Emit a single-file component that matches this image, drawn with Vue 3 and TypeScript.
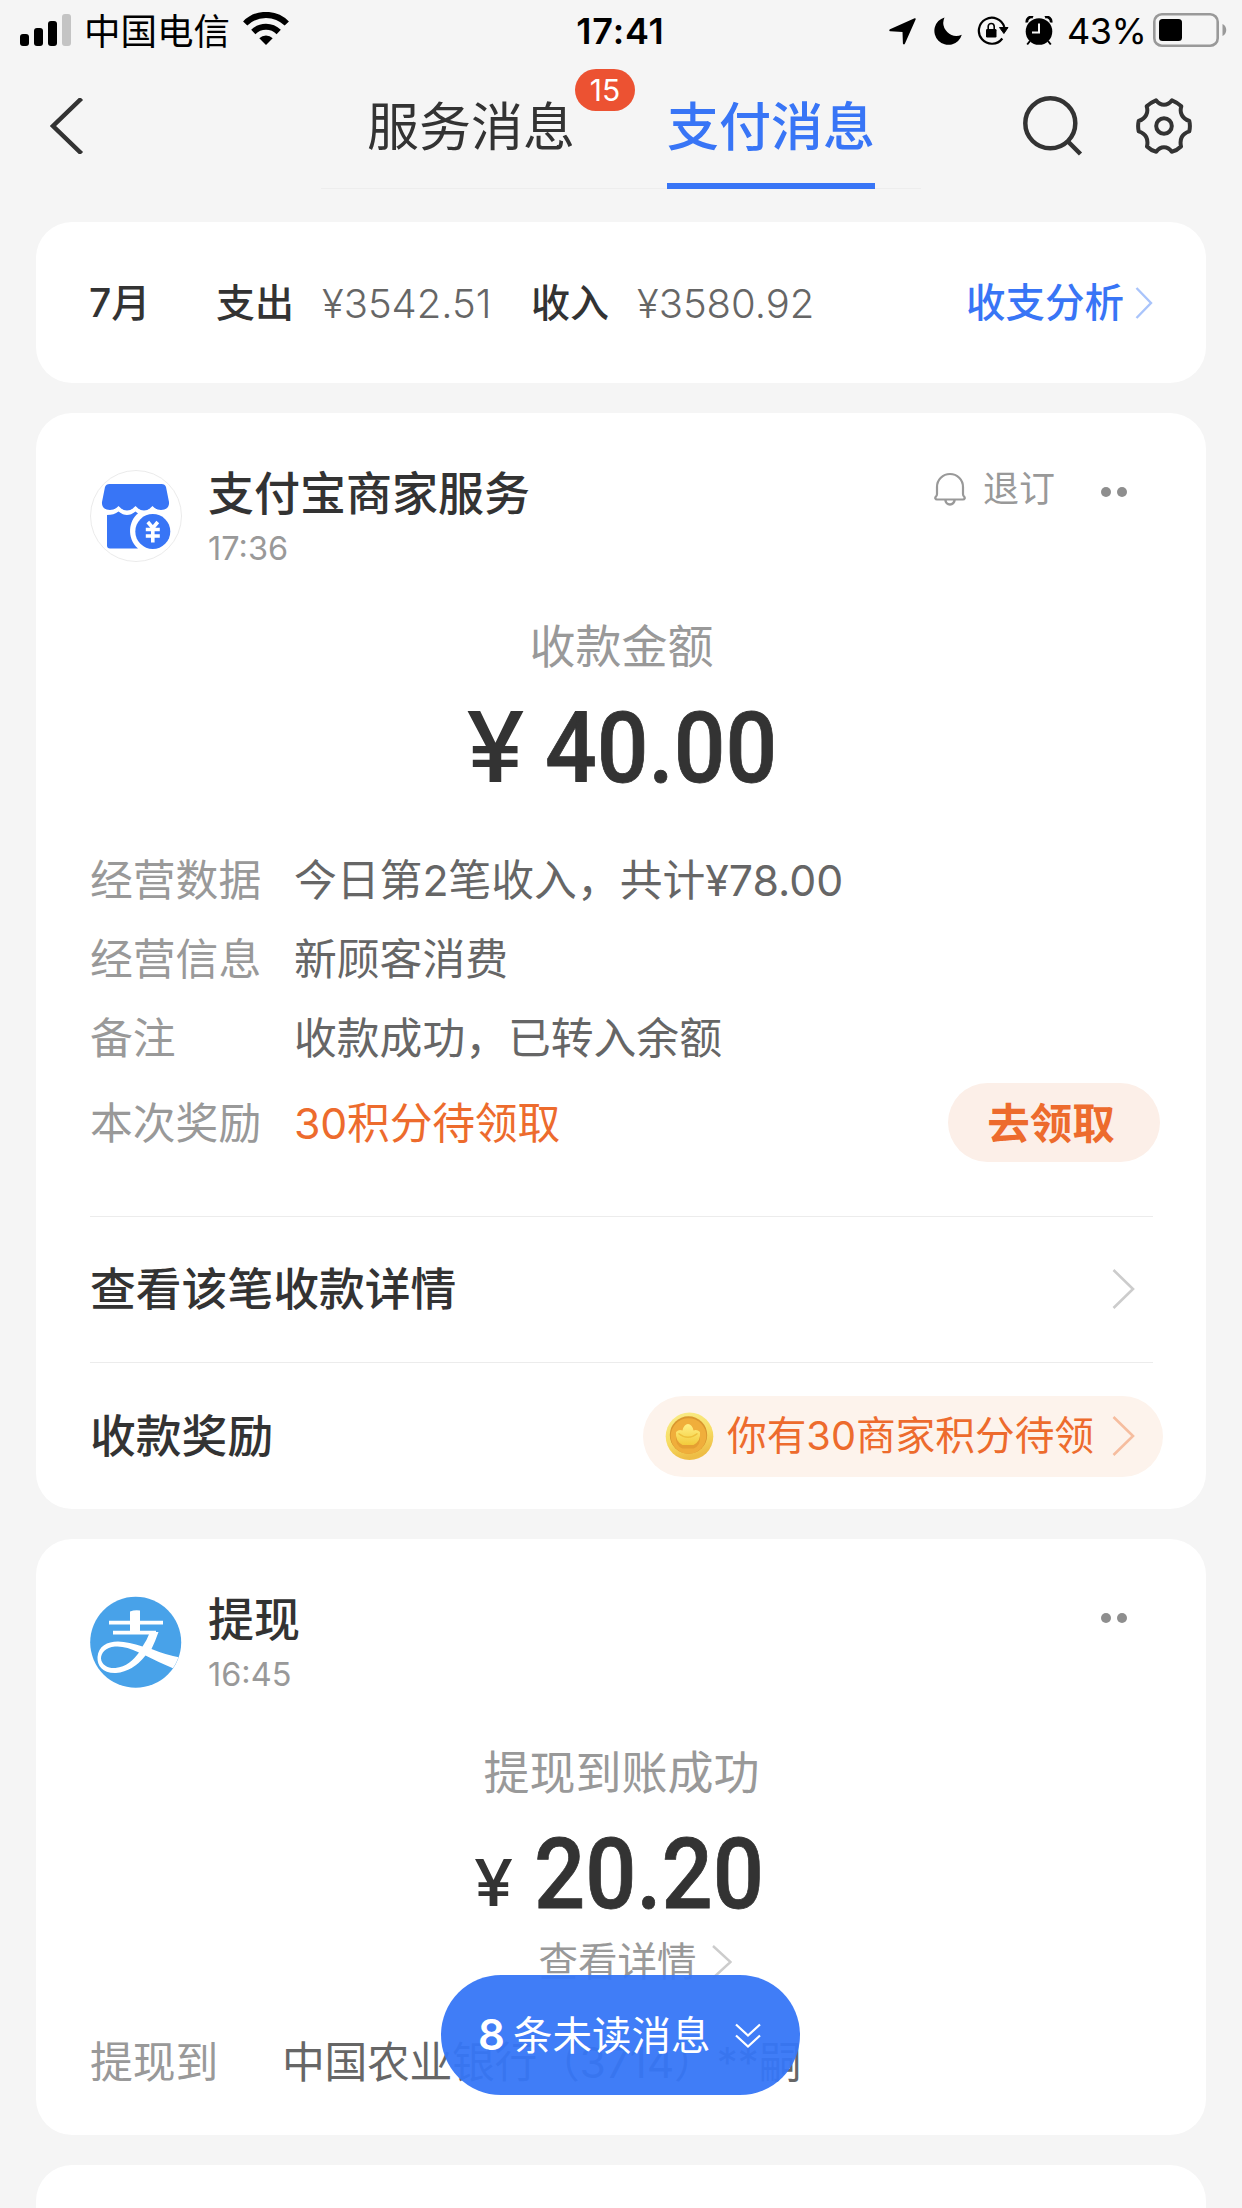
<script setup lang="ts">
interface Detail {
  label: string
  value: string
}

const summary = { month: '7月', expense: '¥3542.51', income: '¥3580.92' }

const details: Detail[] = [
  { label: '经营数据', value: '今日第2笔收入，共计¥78.00' },
  { label: '经营信息', value: '新顾客消费' },
  { label: '备注', value: '收款成功，已转入余额' },
]

const signalBars: number[] = [12, 18, 25, 32]
</script>

<template>
  <div class="screen">
    <div class="status">
      <div class="status-left">
        <div class="signal">
          <i v-for="(h, i) in signalBars" :key="i" :class="{ off: i === 3 }" :style="{ height: h + 'px' }"></i>
        </div>
        <span class="carrier">中国电信</span>
        <svg class="wifi" width="46" height="34" viewBox="0 0 46 34">
          <path d="M2.2 11.5A29.4 29.4 0 0 1 43.8 11.5" fill="none" stroke="#000" stroke-width="6" />
          <path d="M10.3 20A18 18 0 0 1 35.7 20" fill="none" stroke="#000" stroke-width="6" />
          <path d="M16.3 26.3a9.5 9.5 0 0 1 13.4 0L23 33z" />
        </svg>
      </div>
      <span class="clock">17:41</span>
      <div class="status-right">
        <svg class="loc" width="27" height="27" viewBox="0 0 27 27">
          <path d="M25.6.3c.9-.3 1.400.2 1 1.200L16 25.600c-.6 1.300-2 1.100-2.100-.3L13.500 14 1.500 13.300C.1 13.200-.2 11.900 1 11.300z" />
        </svg>
        <svg class="moon" width="28" height="28" viewBox="0 0 28 28">
          <path d="M10.500.4A14 14 0 1 0 27.800 17.800 13.200 13.200 0 0 1 10.500.4z" />
        </svg>
        <svg class="rot" width="32" height="30" viewBox="0 0 32 30">
          <path d="M27.300 11A13 13 0 1 0 25.300 22.500" fill="none" stroke="#000" stroke-width="2.200" />
          <path d="M22.500 11.500h8.500L26.900 17.500z" stroke="#000" />
          <rect x="9" y="13" width="10.500" height="8.500" rx="1.200" />
          <path d="M11.200 13.500v-3a3 3 0 0 1 6 0v3" fill="none" stroke="#000" stroke-width="1.600" />
        </svg>
        <svg class="alarm" width="28" height="30" viewBox="0 0 28 30">
          <circle cx="14" cy="15.500" r="13.300" />
          <path d="M2 6.500A4.500 4.500 0 0 1 8 1.300M26 6.500A4.500 4.500 0 0 0 20 1.300" stroke="#000" stroke-width="2.800" fill="none" />
          <path d="M5 25l-2.800 3.500M23 25l2.800 3.500" stroke="#000" stroke-width="2" />
          <path d="M14 7.500v9H7" stroke="#f5f5f5" stroke-width="2" fill="none" />
        </svg>
        <span class="pct">43%</span>
        <svg class="battery" width="74" height="34" viewBox="0 0 74 34">
          <rect x="1.300" y="1.300" width="63.400" height="31.400" rx="7.500" fill="none" stroke="#999" stroke-width="2.600" />
          <rect x="6" y="6" width="23" height="22" rx="3.500" />
          <path d="M69.500 11c5 2 5 10 0 12z" fill="#999" />
        </svg>
      </div>
    </div>

    <div class="nav">
      <svg class="back" width="34" height="56" viewBox="0 0 34 56">
        <path d="M31.500.5L3 28 31.500 55.500" fill="none" stroke="#333" stroke-width="4.500" />
      </svg>
      <div class="tabs">
        <div class="tab">服务消息<span class="badge">15</span></div>
        <div class="tab active">支付消息</div>
      </div>
      <svg class="search" width="60" height="62" viewBox="0 0 60 62">
        <circle cx="27.300" cy="27.300" r="25" fill="none" stroke="#333" stroke-width="4.500" />
        <path d="M45 45.500L57.500 58" stroke="#333" stroke-width="4.500" />
      </svg>
      <svg class="gear" width="56" height="56" viewBox="0 0 56 56">
        <path
          d="M20 2.300Q23.500 6.800 28 6.800T36 2.300Q41 4.300 45.300 8.300Q43.800 13 45.800 17T53.300 23Q54.500 28 53.300 33.300Q47.800 35 45.800 39T45 48.500Q41 52.500 35.800 53.700Q32.500 49.200 28 49.200T20.200 53.700Q15 52.500 11 48.500Q12.200 43 10.200 39T2.700 33.300Q1.500 28 2.700 23Q8.200 21 10.200 17T10.700 8.300Q15 4.300 20 2.300z"
          fill="none" stroke="#333" stroke-width="4" stroke-linejoin="round" />
        <circle cx="28" cy="28" r="7.800" fill="none" stroke="#333" stroke-width="4" />
      </svg>
    </div>

    <div class="cards">
      <section class="card summary">
        <span class="strong month">{{ summary.month }}</span>
        <span class="strong">支出</span>
        <span class="sum out">{{ summary.expense }}</span>
        <span class="strong">收入</span>
        <span class="sum">{{ summary.income }}</span>
        <span class="analysis">收支分析</span>
        <svg width="18" height="32" viewBox="0 0 18 32">
          <path d="M1.500 1L16 16 1.500 31" fill="none" stroke="#a9c4fb" stroke-width="2.400" />
        </svg>
      </section>

      <section class="card income">
        <header class="head">
          <svg class="avatar" width="92" height="92" viewBox="0 0 92 92">
            <circle cx="46" cy="46" r="45.500" fill="#fff" stroke="#ebebeb" />
            <g transform="translate(-1 0)">
              <path d="M20.500 14h52q3.500 0 4.500 3l3 15c.5 5-3 8-8 8q-5 0-8.500-4-4 4.500-8.500 4.500T46.500 36q-4 4.500-8.500 4.500T29.500 36q-3.500 4-8.500 4c-5 0-8.500-3-8-8l3-15q1-3 4.500-3z" fill="#3875f6" />
              <path d="M18 45q7 0 11.500-3.500Q34 45 38 45t8.500-3.500L49 43.500C40 50 37 68 49 78.500H21q-3 0-3-3z" fill="#3875f6" />
              <circle cx="63.800" cy="61.500" r="17.500" fill="#3875f6" />
              <path d="M58.800 52l5 6 5-6M56.800 59.500h14M56.800 66h14M63.800 58v14.500" fill="none" stroke="#fff" stroke-width="3.600" />
            </g>
          </svg>
          <div class="who">
            <span class="title">支付宝商家服务</span>
            <span class="time">17:36</span>
          </div>
          <div class="unsub">
            <svg width="32" height="34" viewBox="0 0 32 34">
              <path d="M3 22V15a13 13 0 0 1 26 0v7q0 1.500 1 2.500c1.500 1.500.5 3-1 3H3c-1.500 0-2.500-1.500-1-3q1-1 1-2.500z" fill="none" stroke="#999" stroke-width="2.200" />
              <path d="M11.500 28a4.500 4.500 0 0 0 9 0" fill="none" stroke="#999" stroke-width="2.500" />
            </svg>
            <span>退订</span>
          </div>
          <div class="dots"><i></i><i></i></div>
        </header>
        <div class="caption">收款金额</div>
        <div class="amount"><span class="yen">¥</span><span class="num">40.00</span></div>
        <div class="details">
          <div v-for="d in details" :key="d.label" class="row">
            <span class="label">{{ d.label }}</span>
            <span class="value">{{ d.value }}</span>
          </div>
          <div class="row reward">
            <span class="label">本次奖励</span>
            <span class="value hot">30积分待领取</span>
            <span class="claim">去领取</span>
          </div>
        </div>
        <div class="link">
          <span>查看该笔收款详情</span>
          <svg width="23" height="40" viewBox="0 0 23 40">
            <path d="M1.500 1L21 20 1.500 39" fill="none" stroke="#ccc" stroke-width="2.600" />
          </svg>
        </div>
        <div class="link last">
          <span>收款奖励</span>
          <div class="points">
            <svg class="coin" width="49" height="50" viewBox="0 0 49 50">
              <defs>
                <linearGradient id="rim" x1="0" y1="0" x2="0.300" y2="1">
                  <stop offset="0" stop-color="#f9ee8c" />
                  <stop offset="0.600" stop-color="#f7dc62" />
                  <stop offset="1" stop-color="#eebd45" />
                </linearGradient>
                <linearGradient id="ingot" x1="0" y1="0" x2="0" y2="1">
                  <stop offset="0" stop-color="#fff085" />
                  <stop offset="1" stop-color="#f3cb3c" />
                </linearGradient>
              </defs>
              <circle cx="24.500" cy="25.300" r="23.800" fill="url(#rim)" />
              <circle cx="23.500" cy="24" r="18.700" fill="#d9962f" />
              <circle cx="23.500" cy="25" r="17.800" fill="#f0ae3b" />
              <path d="M11 22.500q3-3 6.500-1Q19 14 23 14t5.500 7.500q3.500-2 6.500 1 1 10-6.500 13h-11Q10 32.500 11 22.500z" fill="#d98f2a" transform="translate(0 2)" opacity="0.500" />
              <path d="M11 21q3-3 6.500-1.500Q19 13 23 13t5.500 6.500Q32 18 35 21q1 9-6.500 13h-11Q10 30 11 21z" fill="url(#ingot)" />
              <path d="M13.500 22.500q9.500 7.500 19 0" fill="none" stroke="#eec03c" stroke-width="1.500" />
            </svg>
            <span class="points-text">你有30商家积分待领</span>
            <svg width="23" height="40" viewBox="0 0 23 40">
              <path d="M1.500 1L21 20 1.500 39" fill="none" stroke="#f6bd9f" stroke-width="2.600" />
            </svg>
          </div>
        </div>
      </section>

      <section class="card withdraw">
        <header class="head">
          <svg class="avatar" width="92" height="92" viewBox="0 0 92 92">
            <defs>
              <clipPath id="disc"><circle cx="45.700" cy="46.300" r="45.300" /></clipPath>
            </defs>
            <circle cx="45.700" cy="46.300" r="45.500" fill="#48a2e9" />
            <g clip-path="url(#disc)">
              <path d="M40 15.500q5-2 10-1V36H40z" fill="#fff" />
              <path d="M19 24.800H73v3.800H19zM23 34.800H66v3.600H23z" fill="#fff" />
              <path d="M60 36H68.500Q65 46 61.500 53Q76 59 90 61.500L83.500 72.500Q69 66.500 55.500 59.500Q43 75.500 26 77C13 77.500 7 70 7.500 61C8.500 50 17 45.500 28 45.500Q39 46 52.500 50.500Q57 44 60 36zM49 56.500Q35 49.500 25 50.500C15.500 51.500 11 57 11 62.500C11.500 69 18 72.500 25.500 72C36 71 43.500 64 49 56.500z" fill="#fff" fill-rule="evenodd" />
            </g>
          </svg>
          <div class="who">
            <span class="title">提现</span>
            <span class="time">16:45</span>
          </div>
          <div class="dots"><i></i><i></i></div>
        </header>
        <div class="caption">提现到账成功</div>
        <div class="amount second"><span class="yen">¥</span><span class="num">20.20</span></div>
        <div class="more">
          <span>查看详情</span>
          <svg width="20" height="34" viewBox="0 0 20 34">
            <path d="M1 1L18.500 17 1 33" fill="none" stroke="#ccc" stroke-width="2.400" />
          </svg>
        </div>
        <div class="row bank">
          <span class="label">提现到</span>
          <span class="value">中国农业银行（3714）**嗣</span>
        </div>
      </section>

      <section class="card next"></section>
    </div>

    <div class="unread">
      <b>8</b>
      <span>条未读消息</span>
      <svg width="26" height="26" viewBox="0 0 26 26">
        <path d="M1 1.500L13 12.500 25 1.500M1 12.500L13 23.500 25 12.500" fill="none" stroke="#fff" stroke-width="2.200" />
      </svg>
    </div>
  </div>
</template>

<style>
body {
  margin: 0;
  background: #f5f5f5;
}
</style>

<style scoped>
.screen {
  position: relative;
  width: 1242px;
  height: 2208px;
  overflow: hidden;
  background: #f5f5f5;
  color: #333;
  font-family: Inter, 'Noto Sans CJK SC', sans-serif;
  line-height: 1.2;
  white-space: nowrap;
}
svg {
  display: block;
  flex: none;
}
.status {
  display: grid;
  grid-template-columns: 1fr auto 1fr;
  align-items: center;
  height: 62px;
  padding: 0 15px 0 20px;
  color: #000;
}
.status-left,
.status-right {
  display: flex;
  align-items: center;
  height: 62px;
}
.status-right {
  justify-content: flex-end;
}
.signal {
  display: flex;
  align-items: flex-end;
  gap: 5px;
  height: 32px;
  margin-top: -2px;
}
.signal i {
  width: 9px;
  border-radius: 3px;
  background: #000;
}
.signal i.off {
  background: #c4c4c4;
}
.carrier {
  margin-left: 13px;
  padding-top: 2px;
  font-size: 36.5px;
  line-height: 40px;
}
.wifi {
  margin: -4px 0 0 13px;
}
.clock {
  margin-right: 6px;
  font-size: 36px;
  font-weight: 600;
  line-height: 40px;
  letter-spacing: 0.8px;
}
.loc {
  margin-right: 18px;
}
.moon {
  margin-right: 15px;
}
.rot {
  margin-right: 16px;
}
.alarm {
  margin-right: 14px;
}
.pct {
  width: 78px;
  margin-right: 8px;
  font-size: 36px;
  line-height: 40px;
  letter-spacing: -0.5px;
}
.battery {
  margin-top: -2px;
}
.nav {
  display: flex;
  align-items: flex-start;
  height: 127px;
}
.back {
  margin: 36px 0 0 50px;
}
.tabs {
  display: flex;
  justify-content: space-between;
  box-sizing: border-box;
  width: 600px;
  height: 127px;
  margin-left: 237px;
  padding: 0 46px;
  border-bottom: 1px solid #ededed;
}
.tab {
  position: relative;
  box-sizing: border-box;
  width: 208px;
  height: 127px;
  font-size: 52px;
  line-height: 132px;
}
.tab.active {
  border-bottom: 6px solid #3875f6;
  color: #3875f6;
  font-weight: 500;
}
.badge {
  position: absolute;
  left: 208px;
  top: 7px;
  width: 60px;
  height: 42px;
  border-radius: 21px;
  background: #ec5232;
  color: #fff;
  font-size: 30px;
  line-height: 42px;
  text-align: center;
}
.search {
  margin: 34px 0 0 102px;
}
.gear {
  margin: 36px 0 0 53px;
}
.cards {
  display: flex;
  flex-direction: column;
  gap: 30px;
  padding: 33px 36px 0;
}
.card {
  box-sizing: border-box;
  flex: none;
  padding: 0 53px 0 54px;
  border-radius: 36px;
  background: #fff;
}
.summary {
  display: flex;
  align-items: center;
  height: 161px;
  padding-left: 53px;
  font-size: 39px;
}
.summary span {
  padding-top: 2px;
}
.strong {
  font-weight: 500;
}
.month {
  width: 127px;
}
.sum {
  margin-left: 28px;
  color: #666;
  font-size: 40px;
  font-weight: 300;
}
.out {
  width: 209px;
}
.analysis {
  margin: 0 11px 0 auto;
  color: #3875f6;
  font-size: 39.5px;
  font-weight: 500;
}
.income {
  height: 1096px;
}
.head {
  display: flex;
  height: 92px;
  padding-top: 57px;
}
.who {
  display: flex;
  flex-direction: column;
  margin-left: 26px;
}
.title {
  height: 46px;
  font-size: 46px;
  font-weight: 500;
  line-height: 46px;
}
.time {
  margin-top: 13px;
  color: #999;
  font-size: 32.5px;
  font-weight: 400;
  line-height: 40px;
}
.unsub {
  display: flex;
  align-items: center;
  height: 38px;
  margin-left: auto;
  color: #999;
  font-size: 36px;
}
.unsub span {
  margin-left: 17px;
  padding-top: 2px;
}
.dots {
  display: flex;
  gap: 6px;
  margin: 17px 26px 0 46px;
}
.dots i {
  width: 10px;
  height: 10px;
  border-radius: 50%;
  background: #8e8e8e;
}
.withdraw .dots {
  margin-left: auto;
}
.caption {
  height: 46px;
  margin-top: 60px;
  color: #999;
  font-size: 46px;
  line-height: 48px;
  text-align: center;
}
.amount {
  display: flex;
  height: 72px;
  margin-top: 43px;
  padding-left: 376px;
  line-height: 72px;
}
.yen {
  width: 79px;
  font-size: 98px;
  font-weight: 500;
  transform: scaleX(1.08);
  transform-origin: left;
}
.num {
  font-family: Roboto, sans-serif;
  font-size: 99px;
  font-weight: 500;
  line-height: 75px;
  transform: scaleX(0.92);
  transform-origin: left;
  -webkit-text-stroke: 0.8px #333;
}
.second {
  padding-left: 384px;
}
.second .yen {
  width: 60px;
  font-size: 65px;
  line-height: 92px;
}
.second .num {
  transform: scaleX(0.91);
}
.details {
  margin-top: 58px;
}
.row {
  display: flex;
  align-items: center;
  height: 79px;
  font-size: 42.8px;
}
.label {
  width: 204px;
  color: #999;
}
.value {
  color: #666;
}
.hot {
  color: #ed6b2d;
  letter-spacing: -0.2px;
}
.reward {
  margin-top: 5px;
}
.reward .label,
.reward .value,
.bank span {
  padding-top: 3px;
}
.claim {
  box-sizing: border-box;
  width: 212px;
  height: 79px;
  margin: 0 -7px 0 auto;
  padding-right: 6px;
  border-radius: 40px;
  background: #fcefe8;
  color: #ed6b2d;
  font-size: 42.5px;
  font-weight: 700;
  line-height: 81px;
  text-align: center;
}
.link {
  display: flex;
  align-items: center;
  justify-content: space-between;
  box-sizing: border-box;
  height: 146px;
  margin-top: 54px;
  padding: 0 18px 1px 0;
  border-top: 1px solid #ececec;
  font-size: 45.8px;
  font-weight: 500;
}
.link > span {
  padding-top: 3px;
}
.link.last {
  margin-top: 0;
  padding: 1px 0 0;
}
.points {
  display: flex;
  align-items: center;
  box-sizing: border-box;
  width: 520px;
  height: 81px;
  margin-right: -10px;
  padding: 0 28px 0 22px;
  border-radius: 40.5px;
  background: #fdf3ec;
  color: #ed6b2d;
  font-size: 39.7px;
  font-weight: 400;
}
.points-text {
  margin: 0 auto 0 13px;
  padding-top: 2px;
}
.withdraw {
  height: 596px;
}
.more {
  display: flex;
  align-items: center;
  justify-content: center;
  height: 40px;
  margin-top: 33px;
  padding-left: 27px;
  color: #999;
  font-size: 39.5px;
}
.more span {
  padding-top: 2px;
}
.more svg {
  margin-left: 15px;
}
.bank {
  margin-top: 40px;
}
.bank .label {
  width: 192px;
}
.bank .value {
  letter-spacing: -0.3px;
}
.next {
  height: 80px;
  border-radius: 36px 36px 0 0;
}
.unread {
  position: absolute;
  left: 441px;
  top: 1975px;
  display: flex;
  align-items: center;
  box-sizing: border-box;
  width: 359px;
  height: 120px;
  padding: 1px 39px 0 37px;
  border-radius: 60px;
  background: rgba(54, 118, 247, 0.95);
  color: #fff;
  font-size: 39.5px;
}
.unread span {
  padding-top: 2px;
}
.unread b {
  margin-right: 8px;
  font-size: 42px;
  font-weight: 600;
}
.unread svg {
  margin-left: auto;
}
</style>
